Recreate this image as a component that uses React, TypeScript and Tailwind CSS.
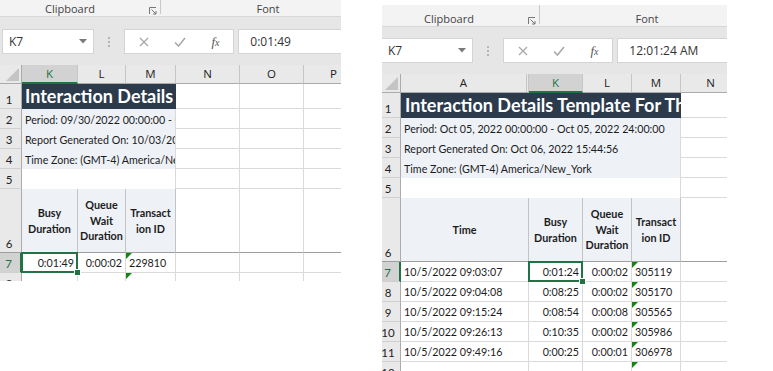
import React from "react";

const UI = "font-['Open_Sans','Noto_Sans',sans-serif]";
const CELL = "font-['Lato','Liberation_Sans',sans-serif]";

function Launcher() {
  return (
    <svg width="8" height="8" viewBox="0 0 8 8" className="block">
      <path d="M0.5 7V0.5H7" fill="none" stroke="#777" />
      <path d="M2.5 2.5L7 7M7 4V7H4" fill="none" stroke="#777" />
    </svg>
  );
}

function Chrome({ value, shift, area }: { value: string; shift: string; area: string }) {
  return (
    <div className={`w-[420px] ${shift} ${UI}`}>
      {/* ribbon group labels */}
      <div className="h-[22px] flex items-start bg-[#f3f3f3] border-b border-[#d8d8d8] text-[11px] text-[#444]">
        <div className="w-[160px] h-full flex items-center pt-[8px] pl-[45px] pr-[3px]">
          <span>Clipboard</span>
          <span className="ml-auto mt-[2px]">
            <Launcher />
          </span>
        </div>
        <div className="w-px h-[19px] bg-[#c8c8c8]" />
        <div className="w-[214px] h-full flex items-center justify-center pt-[8px]">Font</div>
      </div>
      {/* formula bar */}
      <div className={`${area} bg-[#e6e6e6] flex items-start text-[12px] text-[#333]`}>
        <div className="ml-[2px] w-[100px] h-[25px] bg-white border border-[#d4d4d4] flex items-center justify-between pl-[6px] pr-[6px]">
          <span>K7</span>
          <svg width="8" height="5" viewBox="0 0 8 5">
            <polygon points="0,0 8,0 4,4.5" fill="#7a7a7a" />
          </svg>
        </div>
        <div className="ml-[14px] w-[3px] h-[25px] flex flex-col items-center justify-center gap-[2px]">
          <div className="w-[2px] h-[2px] bg-[#b4b4b4]" />
          <div className="w-[2px] h-[2px] bg-[#b4b4b4]" />
          <div className="w-[2px] h-[2px] bg-[#b4b4b4]" />
        </div>
        <div className="ml-[14px] w-[110px] h-[25px] bg-white border border-[#d4d4d4] flex items-center pl-px">
          <div className="w-[36px] flex justify-center">
            <svg width="10" height="10" viewBox="0 0 10 10">
              <path d="M1 1L9 9M9 1L1 9" stroke="#a8a8a8" strokeWidth="1.3" />
            </svg>
          </div>
          <div className="w-[36px] flex justify-center">
            <svg width="12" height="10" viewBox="0 0 12 10">
              <path d="M1 5.5L4.5 9L11 1" fill="none" stroke="#a8a8a8" strokeWidth="1.6" />
            </svg>
          </div>
          <div className="w-[36px] flex justify-center font-['Liberation_Serif',serif] italic text-[13px] text-[#555] leading-none">
            f<span className="text-[10px] mt-[3px]">x</span>
          </div>
        </div>
        <div className="ml-[4px] w-[200px] h-[25px] bg-white border border-[#d4d4d4] flex items-center pl-[11px]">
          {value}
        </div>
      </div>
    </div>
  );
}

function Corner({ w }: { w: string }) {
  return (
    <div className={`${w} shrink-0 h-full bg-[#e9e9e9] border-r border-b border-[#ababab] flex items-end justify-end pr-[2px] pb-[2px]`}>
      <svg width="13" height="13" viewBox="0 0 13 13">
        <polygon points="13,0 13,13 0,13" fill="#c4c4c4" />
      </svg>
    </div>
  );
}

function ColHead({ w, label, sel }: { w: string; label: string; sel?: boolean }) {
  return (
    <div
      className={`${w} shrink-0 h-full flex items-center justify-center border-r border-r-[#c6c6c6] ${
        sel
          ? "bg-[#d2d2d2] text-[#217346] border-b-2 border-b-[#217346]"
          : "bg-[#e9e9e9] text-[#222] border-b border-b-[#ababab]"
      }`}
    >
      {label}
    </div>
  );
}

function RowHead({ w, n, pad, sel }: { w: string; n: number; pad: string; sel?: boolean }) {
  return (
    <div
      className={`${w} ${pad} shrink-0 h-full flex items-end justify-center pb-[3px] border-b border-b-[#d0d0d0] text-[11.5px] leading-none ${CELL} ${
        sel
          ? "bg-[#d2d2d2] text-[#217346] border-r-2 border-r-[#217346]"
          : "bg-[#e9e9e9] text-[#222] border-r border-r-[#ababab]"
      }`}
    >
      {n}
    </div>
  );
}

function Cell({ w, className = "", children }: { w: string; className?: string; children?: React.ReactNode }) {
  return (
    <div className={`${w} shrink-0 h-full relative border-r border-b border-[#dadada] ${className}`}>{children}</div>
  );
}

function Tri() {
  return (
    <svg className="absolute left-0 top-0" width="6" height="6" viewBox="0 0 6 6">
      <polygon points="0,0 6,0 0,6" fill="#11870f" />
    </svg>
  );
}

function Sel() {
  return (
    <div className="absolute -left-[1px] -top-[1px] -right-[1px] -bottom-[1px] border-2 border-[#217346] z-10 pointer-events-none">
      <div className="absolute -right-[5px] -bottom-[5px] w-[7px] h-[7px] bg-[#217346] border border-white" />
    </div>
  );
}

const num = "flex items-end justify-end pr-[3px] pb-[3px] leading-none";
const txt = "flex items-end pl-[3px] pb-[3px] leading-none whitespace-nowrap";
const hdr =
  "bg-[#eef2f7] border-r-[#c4c4c4] border-b-[#9e9e9e] flex items-center justify-center text-center font-bold leading-[15.5px] text-[10.8px]";
const band = "h-full shrink-0 bg-[#eef2f7] border-r border-[#dadada] flex items-end pl-[3px] pb-[3px] leading-none whitespace-nowrap overflow-hidden";
const title = "h-full shrink-0 bg-[#2c3b4c] text-white font-bold text-[18px] leading-none flex items-end pb-[4px] whitespace-nowrap overflow-hidden";

function LeftSheet() {
  const blanks = (
    <>
      <Cell w="w-[64px]" />
      <Cell w="w-[64px]" />
      <Cell w="w-[60px]" />
    </>
  );
  return (
    <div className="w-[341px] h-[281px] shrink-0 overflow-hidden">
      <div className="-mt-[5px]">
        <Chrome value="0:01:49" shift="ml-0" area="h-[48px] pt-[12px]" />
      </div>
      <div className={`h-[19px] flex text-[11.5px] ${UI}`}>
        <Corner w="w-[22px]" />
        <ColHead w="w-[56px]" label="K" sel />
        <ColHead w="w-[48px]" label="L" />
        <ColHead w="w-[50px]" label="M" />
        <ColHead w="w-[64px]" label="N" />
        <ColHead w="w-[64px]" label="O" />
        <ColHead w="w-[60px]" label="P" />
      </div>
      <div className={`${CELL} text-[10.7px] text-[#1c1c1c]`}>
        <div className="h-[25px] flex">
          <RowHead w="w-[22px]" pad="pr-[3px]" n={1} />
          <div className={`w-[154px] pl-[3px] ${title}`}>Interaction Details</div>
          {blanks}
        </div>
        {[
          [2, "Period: 09/30/2022 00:00:00 - 09/30/2022 24:00:00"],
          [3, "Report Generated On: 10/03/2022 10:12:40"],
          [4, "Time Zone: (GMT-4) America/New_York"],
        ].map(([n, t]) => (
          <div key={n} className="h-[20px] flex">
            <RowHead w="w-[22px]" pad="pr-[3px]" n={n as number} />
            <div className={`w-[154px] ${band}`}>{t}</div>
            {blanks}
          </div>
        ))}
        <div className="h-[20px] flex">
          <RowHead w="w-[22px]" pad="pr-[3px]" n={5} />
          <div className="w-[154px] h-full shrink-0 border-r border-[#dadada]" />
          {blanks}
        </div>
        <div className="h-[64px] flex">
          <div className="w-[22px] pr-[3px] shrink-0 h-full flex items-end justify-center pb-[3px] bg-[#e9e9e9] border-r border-r-[#ababab] border-b border-b-[#9e9e9e] text-[11.5px] leading-none text-[#222]">
            6
          </div>
          <Cell w="w-[56px]" className={hdr}>
            Busy
            <br />
            Duration
          </Cell>
          <Cell w="w-[48px]" className={hdr}>
            Queue
            <br />
            Wait
            <br />
            Duration
          </Cell>
          <Cell w="w-[50px]" className={hdr}>
            Transact
            <br />
            ion ID
          </Cell>
          <Cell w="w-[64px]" className="border-b-[#9e9e9e]" />
          <Cell w="w-[64px]" className="border-b-[#9e9e9e]" />
          <Cell w="w-[60px]" className="border-b-[#9e9e9e]" />
        </div>
        <div className="h-[20px] flex">
          <RowHead w="w-[22px]" pad="pr-[3px]" n={7} sel />
          <Cell w="w-[56px]" className={num}>
            0:01:49
            <Sel />
          </Cell>
          <Cell w="w-[48px]" className={num}>
            0:00:02
          </Cell>
          <Cell w="w-[50px]" className={txt}>
            <Tri />
            229810
          </Cell>
          {blanks}
        </div>
        <div className="h-[20px] flex">
          <RowHead w="w-[22px]" pad="pr-[3px]" n={8} />
          <Cell w="w-[56px]" />
          <Cell w="w-[48px]" />
          <Cell w="w-[50px]">
            <Tri />
          </Cell>
          {blanks}
        </div>
      </div>
    </div>
  );
}

const rows = [
  [7, "10/5/2022 09:03:07", "0:01:24", "0:00:02", "305119"],
  [8, "10/5/2022 09:04:08", "0:08:25", "0:00:02", "305170"],
  [9, "10/5/2022 09:15:24", "0:08:54", "0:00:08", "305565"],
  [10, "10/5/2022 09:26:13", "0:10:35", "0:00:02", "305986"],
  [11, "10/5/2022 09:49:16", "0:00:25", "0:00:01", "306978"],
] as const;

function RightSheet() {
  return (
    <div className="w-[345px] h-[366px] mt-[5px] shrink-0 overflow-hidden">
      <Chrome value="12:01:24 AM" shift="-ml-[3px]" area="h-[47px] pt-[11px]" />
      <div className={`h-[19px] flex text-[11.5px] ${UI}`}>
        <Corner w="w-[19px]" />
        <div className="w-[128px] shrink-0 h-full flex bg-[#e9e9e9] border-b border-[#ababab]">
          <div className="w-[126px] h-full flex items-center justify-center border-r border-[#c6c6c6] text-[#222]">A</div>
          <div className="w-[2px] h-full border-r border-[#c6c6c6]" />
        </div>
        <ColHead w="w-[54px]" label="K" sel />
        <ColHead w="w-[49px]" label="L" />
        <ColHead w="w-[49px]" label="M" />
        <ColHead w="w-[60px]" label="N" />
      </div>
      <div className={`${CELL} text-[10.7px] text-[#1c1c1c]`}>
        <div className="h-[25px] flex">
          <RowHead w="w-[19px]" pad="pr-[6px]" n={1} />
          <div className={`w-[280px] pl-[4px] ${title}`}>Interaction Details Template For The Agent</div>
          <Cell w="w-[60px]" />
        </div>
        {[
          [2, "Period: Oct 05, 2022 00:00:00 - Oct 05, 2022 24:00:00"],
          [3, "Report Generated On: Oct 06, 2022 15:44:56"],
          [4, "Time Zone: (GMT-4) America/New_York"],
        ].map(([n, t]) => (
          <div key={n} className="h-[20px] flex">
            <RowHead w="w-[19px]" pad="pr-[6px]" n={n as number} />
            <div className={`w-[280px] ${band}`}>{t}</div>
            <Cell w="w-[60px]" />
          </div>
        ))}
        <div className="h-[20px] flex">
          <RowHead w="w-[19px]" pad="pr-[6px]" n={5} />
          <div className="w-[280px] h-full shrink-0 border-r border-[#dadada]" />
          <Cell w="w-[60px]" />
        </div>
        <div className="h-[64px] flex">
          <div className="w-[19px] pr-[6px] shrink-0 h-full flex items-end justify-center pb-[3px] bg-[#e9e9e9] border-r border-r-[#ababab] border-b border-b-[#9e9e9e] text-[11.5px] leading-none text-[#222]">
            6
          </div>
          <Cell w="w-[128px]" className={hdr}>
            Time
          </Cell>
          <Cell w="w-[54px]" className={hdr}>
            Busy
            <br />
            Duration
          </Cell>
          <Cell w="w-[49px]" className={hdr}>
            Queue
            <br />
            Wait
            <br />
            Duration
          </Cell>
          <Cell w="w-[49px]" className={hdr}>
            Transact
            <br />
            ion ID
          </Cell>
          <Cell w="w-[60px]" className="border-b-[#9e9e9e]" />
        </div>
        {rows.map(([n, t, b, q, id]) => (
          <div key={n} className="h-[20px] flex">
            <RowHead w="w-[19px]" pad="pr-[6px]" n={n} sel={n === 7} />
            <Cell w="w-[128px]" className={txt}>
              {t}
            </Cell>
            <Cell w="w-[54px]" className={num}>
              {b}
              {n === 7 && <Sel />}
            </Cell>
            <Cell w="w-[49px]" className={num}>
              {q}
            </Cell>
            <Cell w="w-[49px]" className={txt}>
              <Tri />
              {id}
            </Cell>
            <Cell w="w-[60px]" />
          </div>
        ))}
        <div className="h-[20px] flex">
          <RowHead w="w-[19px]" pad="pr-[6px]" n={12} />
          <Cell w="w-[128px]" />
          <Cell w="w-[54px]" />
          <Cell w="w-[49px]" />
          <Cell w="w-[49px]">
            <Tri />
          </Cell>
          <Cell w="w-[60px]" />
        </div>
      </div>
    </div>
  );
}

export default function App() {
  return (
    <div className="w-[773px] h-[371px] bg-white overflow-hidden flex items-start">
      <LeftSheet />
      <div className="w-[41px] shrink-0" />
      <RightSheet />
    </div>
  );
}
